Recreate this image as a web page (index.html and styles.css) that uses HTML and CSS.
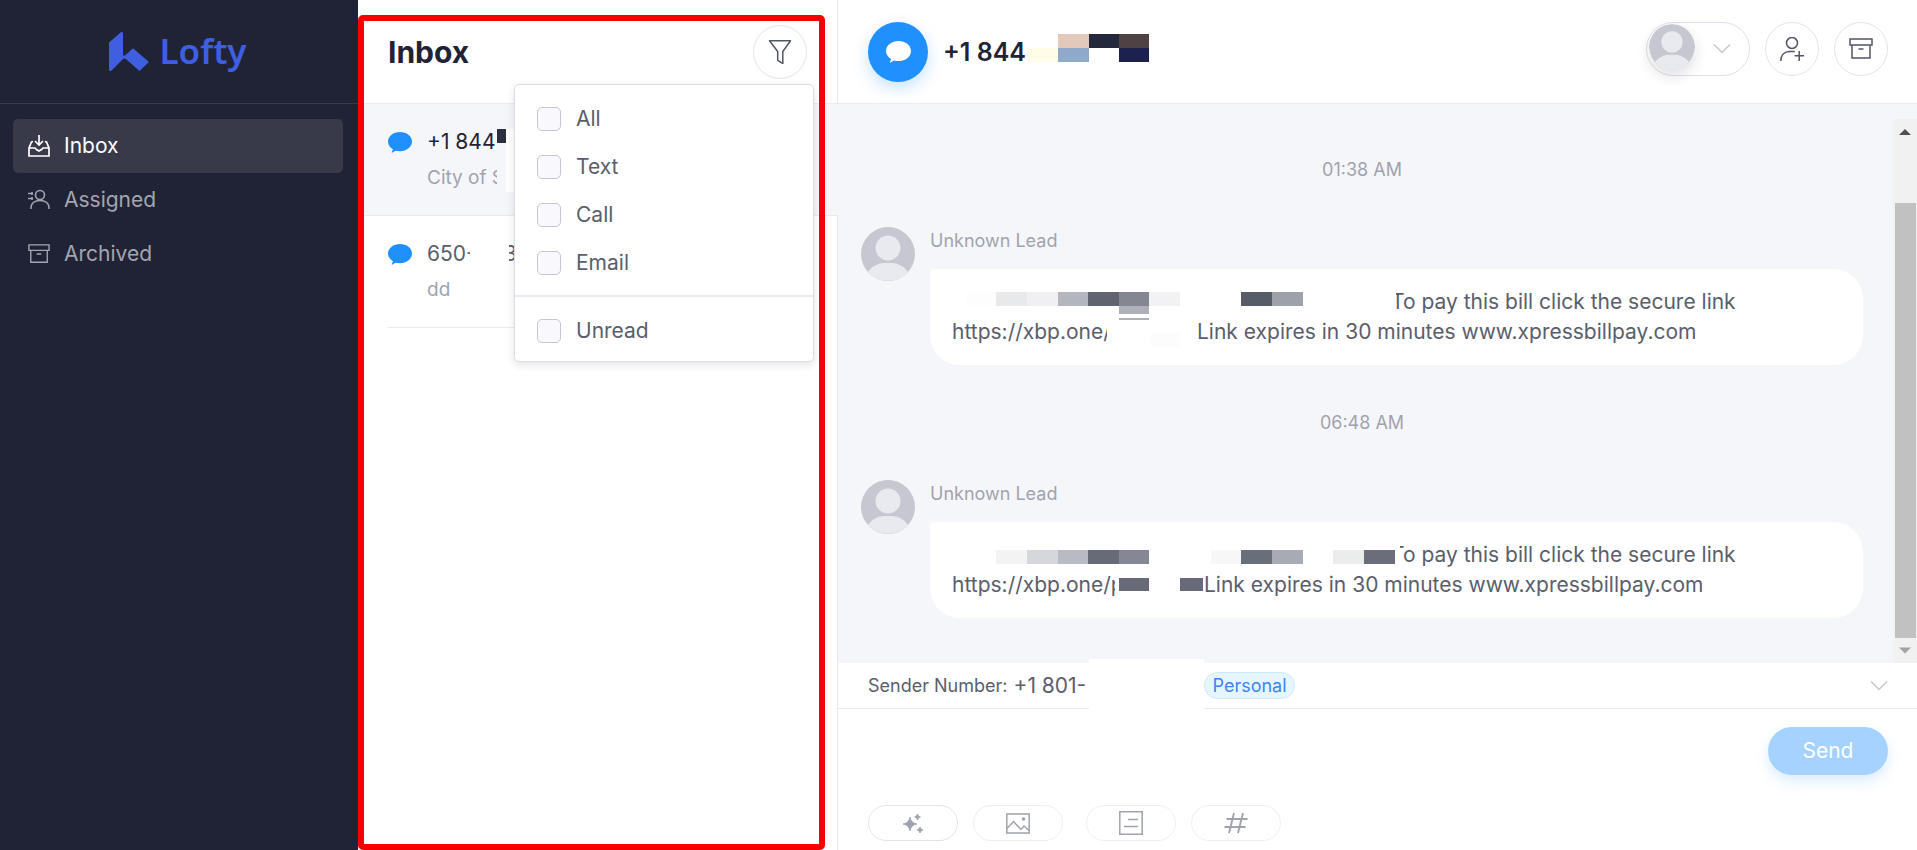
FILE: index.html
```
<!DOCTYPE html>
<html lang="en">
<head>
<meta charset="utf-8">
<meta name="viewport" content="width=device-width, initial-scale=1">
<title>Lofty Inbox</title>
<link rel="stylesheet" href="styles.css">
</head>
<body>
<svg class="defs" aria-hidden="true">
  <symbol id="i-bubble" viewBox="0 0 24 21"><path d="M12 0C5.400 0 0 4.200 0 9.500c0 3.200 1.900 6 4.900 7.700L3.600 21l4-2.300c1.400.3 2.900.5 4.400.5 6.600 0 12-4.300 12-9.700S18.600 0 12 0z" fill="currentColor"/></symbol>
  <symbol id="i-avatar" viewBox="0 0 54 54"><circle cx="27" cy="27" r="27" fill="#c6c7d1"/><circle cx="27" cy="21" r="12.500" fill="#e9eaef"/><path d="M7 45c4-6 11-9 16-9h8c5 0 12 3 16 9a27 27 0 0 1-40 0z" fill="#e9eaef"/></symbol>
  <symbol id="i-archive" viewBox="0 0 24 24"><path d="M1 2h22v6H1zM3 8h18v13H3zM9.500 12h5" fill="none" stroke="currentColor" stroke-width="1.500"/></symbol>
  <symbol id="i-chevron" viewBox="0 0 18 12"><path d="M1 1.500l8 8 8-8" fill="none" stroke="currentColor" stroke-width="1.500"/></symbol>
</svg>
<div class="app">
  <aside class="sidebar">
    <div class="brand">
      <svg class="brand-mark" viewBox="0 0 40 40" aria-hidden="true"><path d="M0 11.500 12 1.200Q14 0 14 2.500V24.500h2L24 17.300 40 31 30.500 40 17.500 28.500Q15.500 26.500 13.500 28.500L2.500 39.500Q0 41 0 38z" fill="#3f5fe0"/></svg>
      <span class="brand-name">Lofty</span>
    </div>
    <nav class="nav">
      <a class="nav-item nav-item--active" href="#inbox">
        <svg class="nav-icon" viewBox="0 0 22 22" aria-hidden="true"><path d="M11 0v9.500M7 6l4 4 4-4M5 6.500 3.500 7 1 13v8h20v-8l-2.500-6-1.500-.5M1 13h6l1.500 1.500L11 16l2.500-1.500L15 13h6" fill="none" stroke="currentColor" stroke-width="1.700"/></svg>
        Inbox</a>
      <a class="nav-item" href="#assigned">
        <svg class="nav-icon" viewBox="0 0 22 22" aria-hidden="true"><path d="M3 20v-1c0-5 4-7.500 9-7.500s9 2.500 9 7.500v1M0 4.500h5M0 9.500h5M4 3v3M4 8v3" fill="none" stroke="currentColor" stroke-width="1.500"/><circle cx="12" cy="6" r="4.500" fill="none" stroke="currentColor" stroke-width="1.600"/></svg>
        Assigned</a>
      <a class="nav-item" href="#archived">
        <svg class="nav-icon" aria-hidden="true"><use href="#i-archive"/></svg>
        Archived</a>
    </nav>
  </aside>

  <section class="list">
    <header class="list-header">
      <h1 class="list-title">Inbox</h1>
      <button class="round-btn" type="button" aria-label="Filter">
        <svg class="icon" viewBox="0 0 24 24" aria-hidden="true"><path d="M1.500.8h21L14.800 11.500v12L9.700 20.300v-8.800z" fill="none" stroke="currentColor" stroke-width="1.500" stroke-linejoin="round"/></svg>
      </button>
      <div class="filter-menu">
        <label class="filter-option"><input class="check" type="checkbox">All</label>
        <label class="filter-option"><input class="check" type="checkbox">Text</label>
        <label class="filter-option"><input class="check" type="checkbox">Call</label>
        <label class="filter-option"><input class="check" type="checkbox">Email</label>
        <hr class="filter-rule">
        <label class="filter-option"><input class="check" type="checkbox">Unread</label>
      </div>
    </header>
    <a class="thread thread--active" href="#t1">
      <svg class="thread-icon" aria-hidden="true"><use href="#i-bubble"/></svg>
      <span class="thread-body">
        <span class="thread-name"><span class="slot slot--area">+1 844</span><svg class="mosaic" width="17" height="27" aria-hidden="true"><path fill="#2c2e40" d="M0 0h9v14H0z"/><path fill="#fff" d="M9 0h20v63H9z"/></svg></span>
        <span class="thread-text"><span class="slot slot--city">City of S</span><svg class="mosaic" width="8" height="24" aria-hidden="true"><path fill="#f5f6fa" d="M0 0h8v24H0z"/></svg></span>
      </span>
    </a>
    <a class="thread" href="#t2">
      <svg class="thread-icon" aria-hidden="true"><use href="#i-bubble"/></svg>
      <span class="thread-body">
        <span class="thread-name"><span class="slot slot--prefix">650-</span><svg class="mosaic" width="34" height="24" aria-hidden="true"><path fill="#fff" d="M0 0h39v24H0z"/></svg><span>3</span></span>
        <span class="thread-text">dd</span>
      </span>
    </a>
  </section>

  <main class="chat">
    <header class="chat-header">
      <span class="contact-badge"><svg class="contact-icon" aria-hidden="true"><use href="#i-bubble"/></svg></span>
      <h2 class="contact-name">+1 844</h2>
      <svg class="mosaic contact-mosaic" width="121" height="28" aria-hidden="true"><path fill="#fffde8" d="M0 14h30v14H0z"/><path fill="#e3c9ba" d="M30 0h31v14H30z"/><path fill="#8fa9cb" d="M30 14h31v14H30z"/><path fill="#23293b" d="M61 0h30v14H61z"/><path fill="#4f4244" d="M91 0h30v14H91z"/><path fill="#1d2150" d="M91 14h30v14H91z"/></svg>
      <div class="chat-actions">
        <button class="owner-btn" type="button" aria-label="Owner"><svg class="owner-avatar" aria-hidden="true"><use href="#i-avatar"/></svg><svg class="chevron" aria-hidden="true"><use href="#i-chevron"/></svg></button>
        <button class="round-btn" type="button" aria-label="Add person"><svg class="icon" viewBox="0 0 24 24" aria-hidden="true"><circle cx="12" cy="6" r="5.500" fill="none" stroke="currentColor" stroke-width="1.500"/><path d="M.8 24c0-6 3.500-9.500 9-9.500h5M14.500 18.800h9.500M19.200 14v10" fill="none" stroke="currentColor" stroke-width="1.500"/></svg></button>
        <button class="round-btn" type="button" aria-label="Archive"><svg class="icon" aria-hidden="true"><use href="#i-archive"/></svg></button>
      </div>
    </header>

    <div class="stream">
      <div class="messages">
        <time class="stamp">01:38 AM</time>
        <article class="message">
          <svg class="avatar" aria-hidden="true"><use href="#i-avatar"/></svg>
          <div class="message-body">
            <div class="sender">Unknown Lead</div>
            <div class="bubble">
              <div class="line"><svg class="mosaic" width="439" height="30" aria-hidden="true"><path fill="#fff" d="M350 0h94v30h-94z"/><path fill="#fdfdfd" d="M14 5h30v14H14z"/><path fill="#e8e9eb" d="M44 5h31v14H44z"/><path fill="#f0f0f2" d="M75 5h31v14H75z"/><path fill="#b4b6bd" d="M106 5h30v14h-30z"/><path fill="#5f6470" d="M136 5h31v14h-31z"/><path fill="#848791" d="M167 5h30v14h-30z"/><path fill="#f2f2f4" d="M197 5h31v14h-31z"/><path fill="#afb1b9" d="M167 19h30v8h-30zM167 31h30v2h-30z"/><path fill="#575c69" d="M289 5h31v14h-31z"/><path fill="#9da1a9" d="M320 5h31v14h-31z"/></svg><span>To pay this bill click the secure link</span></div>
              <div class="line"><span class="slot slot--url">https://xbp.one/</span><svg class="mosaic" width="90" height="30" aria-hidden="true"><path fill="#fff" d="M0 4h11v26H0z"/><path fill="#fcfcfc" d="M43 16h30v14H43z"/></svg><span>Link expires in 30 minutes www.xpressbillpay.com</span></div>
            </div>
          </div>
        </article>
        <time class="stamp">06:48 AM</time>
        <article class="message">
          <svg class="avatar" aria-hidden="true"><use href="#i-avatar"/></svg>
          <div class="message-body">
            <div class="sender">Unknown Lead</div>
            <div class="bubble">
              <div class="line"><svg class="mosaic" width="439" height="30" aria-hidden="true"><path fill="#fff" d="M350 0h98v30h-98z"/><path fill="#f3f3f3" d="M44 10h31v14H44z"/><path fill="#d6d7da" d="M75 10h31v14H75z"/><path fill="#b8bbc3" d="M106 10h30v14h-30z"/><path fill="#676a77" d="M136 10h31v14h-31z"/><path fill="#858894" d="M167 10h30v14h-30z"/><path fill="#f7f7f8" d="M259 10h30v14h-30z"/><path fill="#696e7b" d="M289 10h31v14h-31z"/><path fill="#a8abb5" d="M320 10h31v14h-31z"/><path fill="#ebecec" d="M381 10h31v14h-31z"/><path fill="#6b6e7a" d="M412 10h31v14h-31z"/></svg><span>To pay this bill click the secure link</span></div>
              <div class="line"><span class="slot slot--url-long">https://xbp.one/p</span><svg class="mosaic" width="89" height="30" aria-hidden="true"><path fill="#fff" d="M0 0h20v30H0z"/><path fill="#676a79" d="M4 8h30v13H4zM65 8h23v13H65z"/></svg><span>Link expires in 30 minutes www.xpressbillpay.com</span></div>
            </div>
          </div>
        </article>
      </div>
      <div class="scrollbar" aria-hidden="true">
        <svg class="scroll-arrow" viewBox="0 0 24 24"><path d="M6 15.500 12 9.500l6 6z" fill="#505050"/></svg>
        <div class="scroll-track"><div class="scroll-thumb"></div></div>
        <svg class="scroll-arrow" viewBox="0 0 24 24"><path d="M6 9l6 6 6-6z" fill="#a3a3a3"/></svg>
      </div>
    </div>

    <div class="sender-bar">
      <span class="sender-label">Sender Number:</span>
      <span class="sender-number">+1 801-</span>
      <span class="sender-blank"></span>
      <span class="tag">Personal</span>
      <button class="chevron-btn" type="button" aria-label="Choose number"><svg class="chevron" aria-hidden="true"><use href="#i-chevron"/></svg></button>
    </div>

    <footer class="composer">
      <div class="compose-row">
        <textarea class="compose-input" aria-label="Message"></textarea>
        <button class="send" type="button">Send</button>
      </div>
      <div class="tools">
        <button class="tool tool--strong" type="button" aria-label="Assistant"><svg class="icon" viewBox="0 0 24 24" aria-hidden="true"><path d="M9 6q1 6 7 7-6 1-7 7-1-6-7-7 6-1 7-7zM16.500 3q.5 2.500 3 3-2.500.5-3 3-.5-2.500-3-3 2.500-.5 3-3zM19 16q.5 2.500 3 3-2.500.5-3 3-.5-2.500-3-3 2.500-.5 3-3z" fill="currentColor" stroke="currentColor" stroke-width=".8"/></svg></button>
        <button class="tool tool--image" type="button" aria-label="Image"><svg class="icon" viewBox="0 0 24 24" aria-hidden="true"><path d="M.8 3h22.400v19H.8zM1 17.500l6.500-7 7.500 8 3-3.500 5 4.500" fill="none" stroke="currentColor" stroke-width="1.500"/><circle cx="17.500" cy="8" r="1.800" fill="currentColor"/></svg></button>
        <button class="tool" type="button" aria-label="Template"><svg class="icon" viewBox="0 0 24 24" aria-hidden="true"><path d="M.8.8h22.400v22.400H.8zM9 8.500h10M5 15.500h14" fill="none" stroke="currentColor" stroke-width="1.500"/></svg></button>
        <button class="tool" type="button" aria-label="Variable"><svg class="icon" viewBox="0 0 24 24" aria-hidden="true"><path d="M10 2 5 22M19 2l-5 20M2.500 8h21M.5 16h21" fill="none" stroke="currentColor" stroke-width="1.900"/></svg></button>
      </div>
    </footer>
  </main>
  <div class="highlight" aria-hidden="true"></div>
</div>
</body>
</html>
```
FILE: styles.css
```
* { box-sizing: border-box; }
body { margin: 0; font-family: Inter, "Liberation Sans", sans-serif; font-size: 21px; line-height: 30px; color: #5a5e6c; background: #fff; }
button, textarea { font: inherit; }
button { padding: 0; cursor: pointer; }
a { color: inherit; text-decoration: none; }
.defs { display: none; }
.app { position: relative; display: grid; grid-template-columns: 358px 480px minmax(0, 1fr); height: 100vh; overflow: hidden; }

/* Sidebar */
.sidebar { background: #1f2335; color: #a3a5b0; }
.brand { display: flex; align-items: center; justify-content: center; gap: 10px; height: 104px; border-bottom: 1px solid #373b4c; padding: 0 2px 2px 0; }
.brand-mark { width: 40px; height: 40px; }
.brand-name { color: #3f5fe0; font-family: "Noto Sans", sans-serif; font-weight: 600; font-size: 35px; line-height: 40px; }
.nav { padding: 15px; padding-left: 13px; }
.nav-item { display: flex; align-items: center; gap: 14px; height: 54px; padding: 0 15px; border-radius: 5px; }
.nav-item--active { background: #383a4a; color: #fff; }
.nav-icon { width: 22px; height: 22px; flex: none; }

/* Thread list */
.list { border-right: 1px solid #e8eaf0; min-width: 0; }
.list-header { position: relative; display: flex; align-items: center; justify-content: space-between; height: 104px; padding: 0 30px; border-bottom: 1px solid #e8eaf0; }
.list-title { margin: 0; font-size: 30px; font-weight: 700; color: #1f2335; }
.round-btn { display: grid; place-items: center; width: 54px; height: 54px; border: 1px solid #e3e4ea; border-radius: 50%; background: #fff; color: #515666; }
.icon { width: 24px; height: 24px; }
.filter-menu { position: absolute; z-index: 3; top: 84px; right: 23px; width: 300px; padding: 10px 0 6px; background: #fff; border: 1px solid #dcdee6; border-radius: 5px; box-shadow: 0 3px 8px rgba(31, 35, 53, .12); }
.filter-option { display: flex; align-items: center; gap: 15px; height: 48px; padding: 0 22px; }
.filter-rule { margin: 8px 0 10px; border: 0; border-top: 2px solid #e8eaf0; }
.check { appearance: none; margin: 0; width: 24px; height: 24px; border: 1px solid #c6c8d1; border-radius: 5px; background: #f9f9fd; }
.check:checked { background: #2090ff; }
.thread { display: flex; gap: 15px; height: 112px; margin: 0 30px; padding-top: 23px; border-bottom: 1px solid #e8eaf0; }
.thread--active { margin: 0 -1px 0 0; padding-left: 30px; background: #f5f6fa; color: #1f2335; }
.thread-icon { width: 24px; height: 21px; margin-top: 5px; color: #2090ff; flex: none; }
.thread-body { display: flex; flex-direction: column; gap: 6px; }
.thread-name, .thread-text { display: flex; height: 30px; align-items: center; }
.thread-text { color: #a0a3af; font-size: 19px; }
.mosaic { position: relative; z-index: 1; display: block; flex: none; overflow: visible; }
.slot { white-space: nowrap; flex: none; }
.slot--area { width: 70px; }
.slot--city { width: 70px; }
.slot--prefix { width: 43px; }

/* Conversation */
.chat { display: flex; flex-direction: column; min-width: 0; }
.chat-header { display: flex; align-items: center; height: 104px; flex: none; padding: 0 29px 0 30px; border-bottom: 1px solid #e8eaf0; }
.contact-badge { display: grid; place-items: center; width: 60px; height: 60px; border-radius: 50%; background: #2090ff; color: #fff; box-shadow: 0 6px 16px rgba(32, 144, 255, .25); }
.contact-icon { width: 25px; height: 22px; }
.contact-name { width: 85px; margin: 0 0 0 15px; font-size: 25px; font-weight: 600; color: #1f2335; white-space: nowrap; }
.contact-mosaic { margin-bottom: 7px; }
.chat-actions { display: flex; gap: 15px; margin: 0 0 5px auto; }
.owner-btn { display: flex; align-items: center; justify-content: space-between; width: 104px; height: 54px; padding: 0 18px 0 2px; border: 1px solid #dfe0e8; border-radius: 27px; background: #fff; color: #c6c7d1; }
.owner-avatar { width: 46px; height: 46px; margin-bottom: 4px; border-radius: 50%; box-shadow: 0 6px 14px rgba(31, 35, 53, .14); }
.chevron { width: 18px; height: 12px; }
.stream { display: flex; flex: 1; min-height: 0; padding-top: 15px; background: #f5f6fa; }
.messages { flex: 1; min-width: 0; padding: 0 30px 0 23px; overflow: hidden; }
.stamp { display: block; padding: 36px 0 42px; text-align: center; font-size: 18px; color: #a0a3af; }
.message { display: flex; gap: 15px; }
.avatar { width: 54px; height: 54px; flex: none; }
.message-body { flex: 1; min-width: 0; }
.sender { height: 42px; line-height: 28px; font-size: 18px; color: #a0a3af; }
.bubble { margin-bottom: 7px; padding: 18px 22px; border-radius: 4px 30px 30px 30px; background: #fff; }
.line { display: flex; height: 30px; white-space: nowrap; }
.slot--url { width: 155px; }
.slot--url-long { width: 163px; }
.scrollbar { display: flex; flex-direction: column; width: 24px; flex: none; background: #f1f1f1; }
.scroll-arrow { width: 24px; height: 25px; flex: none; }
.scroll-track { display: flex; flex: 1; align-items: flex-end; padding: 0 1px 0 2px; }
.scroll-thumb { width: 100%; height: 88%; background: #c1c1c1; }
.sender-bar { display: flex; align-items: center; height: 46px; flex: none; padding: 0 29px 0 30px; border-bottom: 1px solid #e8eaf0; }
.sender-label { font-size: 18px; }
.sender-number { width: 76px; margin-left: 6px; white-space: nowrap; }
.sender-blank { width: 115px; height: 54px; background: #fff; }
.tag { padding: 0 7px; border: 1px solid #cdeafa; border-radius: 14px; background: #e6f6ff; color: #3d85f5; font-size: 18px; line-height: 25px; }
.chevron-btn { display: grid; margin-left: auto; border: 0; background: none; color: #c6c7d1; }
.composer { display: flex; flex-direction: column; justify-content: space-between; height: 141px; flex: none; padding: 18px 29px 9px 30px; }
.compose-row { display: flex; gap: 20px; }
.compose-input { flex: 1; height: 60px; padding: 0; border: 0; outline: 0; resize: none; background: none; }
.send { width: 120px; height: 48px; border: 0; border-radius: 24px; background: #a6d2ff; color: #fff; font-size: 21px; box-shadow: 0 6px 14px rgba(32, 144, 255, .16); }
.tools { display: flex; gap: 15px; }
.tool { display: grid; place-items: center; width: 90px; height: 36px; border: 1px solid #eeeff3; border-radius: 18px; background: #fff; color: #a0a3af; }
.tool--strong { border-color: #e3e4ea; }
.tool--image { margin-right: 8px; }

/* Callout frame over the list column */
.highlight { position: absolute; z-index: 5; top: 15px; bottom: 0; left: 358px; width: 467px; border: 6px solid #f90000; border-radius: 5px; pointer-events: none; }
```
